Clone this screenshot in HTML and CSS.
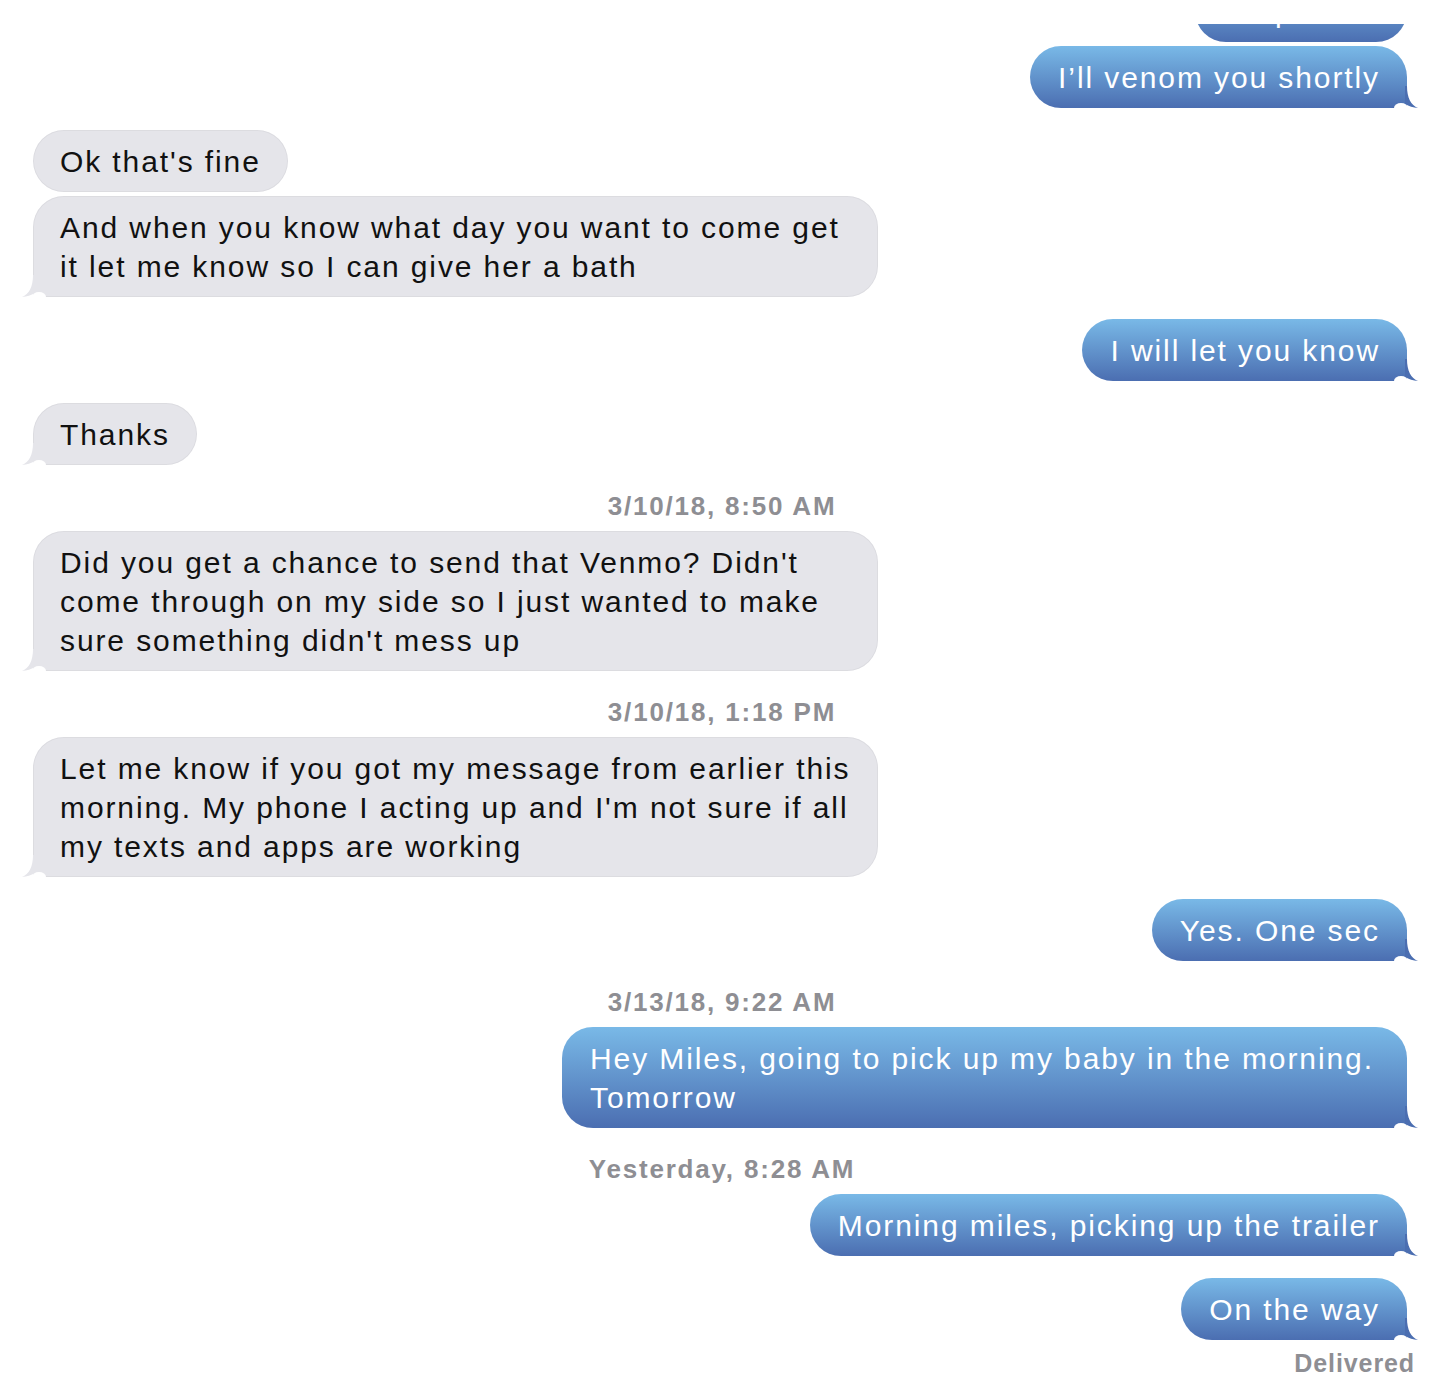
FILE: index.html
```html
<!DOCTYPE html>
<html lang="en">
<head>
    <meta charset="UTF-8">
    <meta name="viewport" content="width=device-width, initial-scale=1.0">
    <title>Messages</title>
    <link rel="stylesheet" href="styles.css">
</head>
<body>
    <div class="thread">
        <!-- earlier message, scrolled mostly out of view -->
        <div class="row out clipped">
            <div class="bubble">Ok perfect</div>
        </div>
        <div class="row out same">
            <div class="bubble tail">I’ll venom you shortly</div>
        </div>

        <div class="row in new">
            <div class="bubble">Ok that's fine</div>
        </div>
        <div class="row in same">
            <div class="bubble tail wide">And when you know what day you want to come get<br>it let me know so I can give her a bath</div>
        </div>

        <div class="row out new">
            <div class="bubble tail">I will let you know</div>
        </div>

        <div class="row in new">
            <div class="bubble tail">Thanks</div>
        </div>

        <div class="stamp">3/10/18, 8:50 AM</div>
        <div class="row in">
            <div class="bubble tail wide">Did you get a chance to send that Venmo? Didn't<br>come through on my side so I just wanted to make<br>sure something didn't mess up</div>
        </div>

        <div class="stamp">3/10/18, 1:18 PM</div>
        <div class="row in">
            <div class="bubble tail wide">Let me know if you got my message from earlier this<br>morning. My phone I acting up and I'm not sure if all<br>my texts and apps are working</div>
        </div>

        <div class="row out new">
            <div class="bubble tail">Yes. One sec</div>
        </div>

        <div class="stamp">3/13/18, 9:22 AM</div>
        <div class="row out">
            <div class="bubble tail wide">Hey Miles, going to pick up my baby in the morning.<br>Tomorrow</div>
        </div>

        <div class="stamp">Yesterday, 8:28 AM</div>
        <div class="row out">
            <div class="bubble tail">Morning miles, picking up the trailer</div>
        </div>
        <div class="row out new">
            <div class="bubble tail">On the way</div>
        </div>
        <div class="status">Delivered</div>
    </div>
</body>
</html>
```

FILE: styles.css
```css
body {
    margin: 0;
    background-color: #fff;
    font-family: "Liberation Sans", Arial, sans-serif;
}

.thread {
    overflow: hidden;
    padding: 0 33px 20px 33px;
    height: 1398px;
    box-sizing: border-box;
}

.row {
    display: flex;
}

.row.in {
    justify-content: flex-start;
}

.row.out {
    justify-content: flex-end;
}

.row.clipped {
    height: 18px;
    margin-top: 24px;
    overflow: hidden;
    align-items: flex-end;
}

.row.same {
    margin-top: 4px;
}

.row.new {
    margin-top: 22px;
}

.bubble {
    position: relative;
    flex-shrink: 0;
    padding: 12px 27px 11px 27px;
    border-radius: 31px;
    font-size: 30px;
    line-height: 39px;
    letter-spacing: 1.9px;
    white-space: nowrap;
}

.bubble.wide {
    width: 845px;
    box-sizing: border-box;
}

.in .bubble {
    background-color: #e5e5ea;
    color: #111;
    box-shadow: inset 0 0 0 1px rgba(0, 0, 0, 0.04);
}

.out .bubble {
    background: linear-gradient(#79b9e7, #4b6eb1);
    color: #fff;
    padding-left: 28px;
}

/* tails */
.out .bubble.tail {
    border-bottom-right-radius: 0;
}

.in .bubble.tail {
    border-bottom-left-radius: 0;
}

.bubble.tail::before,
.bubble.tail::after {
    content: "";
    position: absolute;
}

.bubble.tail::before {
    bottom: 0;
    width: 13px;
    height: 22px;
}

.bubble.tail::after {
    bottom: -5px;
    width: 14px;
    height: 10px;
    border-radius: 50%;
    background-color: #fff;
}

.out .bubble.tail::before {
    right: -11px;
    background-color: #4b6eb1;
    clip-path: path("M 2 0 C 2 12, 6 19, 13 22 C 8 21.5, 4 20.5, 0 18 L 0 0 Z");
}

.out .bubble.tail::after {
    right: -1px;
}

.in .bubble.tail::before {
    left: -11px;
    background-color: #e5e5ea;
    clip-path: path("M 11 0 C 11 12, 7 19, 0 22 C 5 21.5, 9 20.5, 13 18 L 13 0 Z");
}

.in .bubble.tail::after {
    left: -1px;
}

.stamp {
    margin: 26px 0 10px 0;
    text-align: center;
    font-size: 26px;
    line-height: 30px;
    font-weight: bold;
    letter-spacing: 1.8px;
    color: #8e8e93;
    padding-left: 4px;
}

.status {
    margin: 8px -8px 0 0;
    text-align: right;
    font-size: 25px;
    line-height: 30px;
    font-weight: bold;
    letter-spacing: 0.9px;
    color: #8e8e93;
}
```
